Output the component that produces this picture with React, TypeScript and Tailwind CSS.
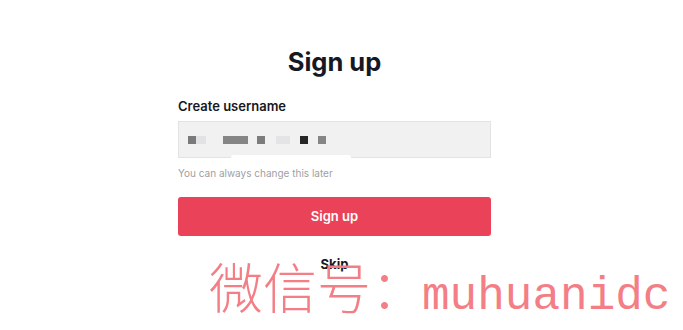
export default function App() {
  // bloques pixelados del nombre de usuario
  const bloques = [
    { w: 8, c: "bg-[#7a7a7a]", ml: 9 },
    { w: 10, c: "bg-[#e2e2e4]", ml: 0 },
    { w: 25, c: "bg-[#858585]", ml: 17 },
    { w: 8, c: "bg-[#7c7c7c]", ml: 9 },
    { w: 14, c: "bg-[#e4e4e6]", ml: 11 },
    { w: 8, c: "bg-[#262626]", ml: 10 },
    { w: 8, c: "bg-[#858585]", ml: 10 },
  ];
  return (
    <div className="relative w-[683px] h-[330px] bg-white overflow-hidden font-['Inter',sans-serif] text-[#161823]">
      <div className="w-[313px] ml-[178px] pt-[44px] flex flex-col">
        <h1 className="text-center text-[25.5px] leading-[36px] font-bold">Sign up</h1>
        <label className="mt-[18px] text-[13px] leading-[16px] font-semibold">Create username</label>
        <div className="relative mt-[7px] h-[37px] bg-[#f1f1f2] border border-[#e3e3e5] flex items-center">
          {bloques.map((b, i) => (
            <div key={i} className={"h-[8px] " + b.c} style={{ width: b.w, marginLeft: b.ml }} />
          ))}
          <div className="absolute left-[52px] top-[33px] w-[120px] h-[6px] bg-white rounded-full" />
        </div>
        <p className="mt-[9px] text-[10px] leading-[12px] text-[#a0a0a4]">You can always change this later</p>
        <button className="mt-[18px] h-[39px] rounded-[3px] bg-[#ea4359] text-white text-[13px] font-semibold">Sign up</button>
        <p className="mt-[20px] text-center text-[13px] leading-[16px] font-bold">Skip</p>
      </div>
      <div className="absolute left-[209px] top-[256px] flex items-baseline text-[#f37e85] whitespace-nowrap">
        <span className="text-[54px] leading-[60px] font-extralight font-['Noto_Sans_CJK_SC',sans-serif]">微信号：</span>
        <span className="ml-[-3px] text-[46px] leading-[60px] font-['Liberation_Mono',monospace]">muhuanidc</span>
      </div>
    </div>
  );
}
